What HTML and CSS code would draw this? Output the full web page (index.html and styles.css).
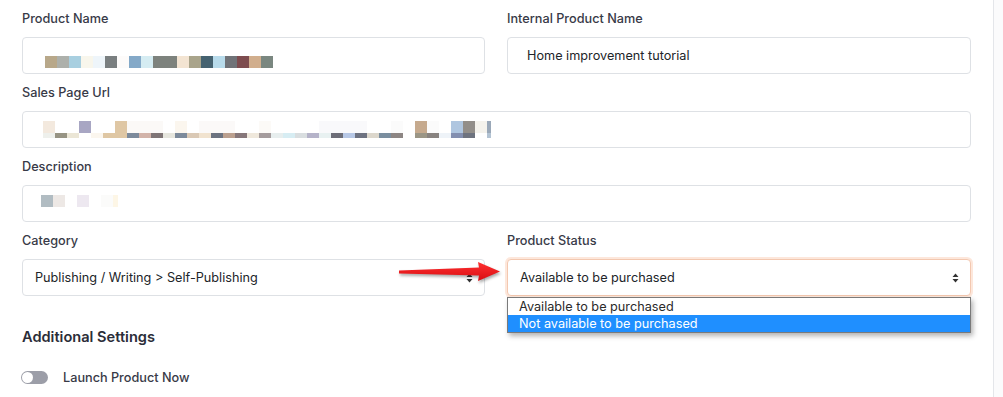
FILE: index.html
```html
<!DOCTYPE html>
<html lang="en">
<head>
    <meta charset="UTF-8">
    <meta name="viewport" content="width=device-width, initial-scale=1.0">
    <title>Product Settings</title>
    <link rel="stylesheet" href="styles.css">
</head>
<body>
    <div class="page">
        <main class="form">
            <div class="row">
                <div class="group">
                    <div class="label">Product Name</div>
                    <div class="control mosaic-name">
                        <svg width="228" height="12" viewBox="0 0 228 12">
                            <rect x="0" width="12" height="12" fill="#b8a88a"/>
                            <rect x="12" width="12" height="12" fill="#adb0ab"/>
                            <rect x="24" width="12" height="12" fill="#a8cfe0"/>
                            <rect x="36" width="12" height="12" fill="#f8f6ec"/>
                            <rect x="48" width="12" height="12" fill="#eef5fa"/>
                            <rect x="60" width="12" height="12" fill="#7a7f80"/>
                            <rect x="72" width="12" height="12" fill="#fdfbfa"/>
                            <rect x="84" width="12" height="12" fill="#84a9c8"/>
                            <rect x="96" width="12" height="12" fill="#d5ecf2"/>
                            <rect x="108" width="24" height="12" fill="#7d827d"/>
                            <rect x="132" width="12" height="12" fill="#f3e4d2"/>
                            <rect x="144" width="12" height="12" fill="#a9a48b"/>
                            <rect x="156" width="12" height="12" fill="#456270"/>
                            <rect x="168" width="12" height="12" fill="#b8dbeb"/>
                            <rect x="180" width="12" height="12" fill="#707378"/>
                            <rect x="192" width="12" height="12" fill="#7e4c4f"/>
                            <rect x="204" width="12" height="12" fill="#d1ae8d"/>
                            <rect x="216" width="12" height="12" fill="#7a8780"/>
                        </svg>
                    </div>
                </div>
                <div class="group">
                    <div class="label">Internal Product Name</div>
                    <div class="control text">Home improvement tutorial</div>
                </div>
            </div>

            <div class="group">
                <div class="label">Sales Page Url</div>
                <div class="control mosaic-url">
                    <svg width="448" height="17" viewBox="0 0 448 17">
                        <!-- top row -->
                        <rect x="0" width="12" height="12" fill="#f3e9de"/>
                        <rect x="36" width="12" height="12" fill="#a8a6c3"/>
                        <rect x="72" width="12" height="12" fill="#dfc7a4"/>
                        <rect x="84" width="36" height="12" fill="#fbf9f7"/>
                        <rect x="132" width="12" height="12" fill="#fbf6ee"/>
                        <rect x="156" width="36" height="12" fill="#fbf9f8"/>
                        <rect x="216" width="12" height="12" fill="#fcfaf7"/>
                        <rect x="276" width="48" height="12" fill="#f9f9fb"/>
                        <rect x="348" width="12" height="12" fill="#fbfbfb"/>
                        <rect x="372" width="12" height="12" fill="#c6aa8e"/>
                        <rect x="384" width="12" height="12" fill="#fbfbfb"/>
                        <rect x="408" width="12" height="12" fill="#afc6e0"/>
                        <rect x="420" width="12" height="12" fill="#928e89"/>
                        <rect x="432" width="12" height="12" fill="#f4f2ec"/>
                        <rect x="444" width="4" height="12" fill="#9aa8b8"/>
                        <!-- bottom row -->
                        <rect x="0" y="12" width="12" height="5" fill="#eef0ec"/>
                        <rect x="12" y="12" width="12" height="5" fill="#979484"/>
                        <rect x="24" y="12" width="12" height="5" fill="#ebe6d6"/>
                        <rect x="48" y="12" width="12" height="5" fill="#fbf6ee"/>
                        <rect x="60" y="12" width="24" height="5" fill="#dfc7a4"/>
                        <rect x="84" y="12" width="12" height="5" fill="#7c8a9b"/>
                        <rect x="96" y="12" width="12" height="5" fill="#d2b3a9"/>
                        <rect x="108" y="12" width="12" height="5" fill="#7f7576"/>
                        <rect x="120" y="12" width="12" height="5" fill="#e6e6de"/>
                        <rect x="132" y="12" width="12" height="5" fill="#7c8a9b"/>
                        <rect x="144" y="12" width="12" height="5" fill="#dac9b5"/>
                        <rect x="156" y="12" width="12" height="5" fill="#f1e3cf"/>
                        <rect x="168" y="12" width="12" height="5" fill="#6c7380"/>
                        <rect x="180" y="12" width="12" height="5" fill="#bba08f"/>
                        <rect x="192" y="12" width="12" height="5" fill="#86777a"/>
                        <rect x="204" y="12" width="12" height="5" fill="#efe8dc"/>
                        <rect x="216" y="12" width="12" height="5" fill="#a59c9d"/>
                        <rect x="228" y="12" width="12" height="5" fill="#e7eeee"/>
                        <rect x="240" y="12" width="12" height="5" fill="#d7edf3"/>
                        <rect x="252" y="12" width="12" height="5" fill="#d9dee0"/>
                        <rect x="264" y="12" width="12" height="5" fill="#b5b3c9"/>
                        <rect x="276" y="12" width="12" height="5" fill="#e8f1f1"/>
                        <rect x="288" y="12" width="12" height="5" fill="#6d6e78"/>
                        <rect x="300" y="12" width="12" height="5" fill="#b7c8e6"/>
                        <rect x="312" y="12" width="12" height="5" fill="#6d7281"/>
                        <rect x="324" y="12" width="12" height="5" fill="#dcd7cc"/>
                        <rect x="336" y="12" width="12" height="5" fill="#7a8e9f"/>
                        <rect x="348" y="12" width="12" height="5" fill="#8d8684"/>
                        <rect x="372" y="12" width="12" height="5" fill="#9b9686"/>
                        <rect x="384" y="12" width="12" height="5" fill="#888380"/>
                        <rect x="396" y="12" width="12" height="5" fill="#eef3f8"/>
                        <rect x="408" y="12" width="12" height="5" fill="#838fb0"/>
                        <rect x="420" y="12" width="12" height="5" fill="#6e737f"/>
                        <rect x="444" y="12" width="4" height="5" fill="#b3c3d3"/>
                    </svg>
                </div>
            </div>

            <div class="group">
                <div class="label">Description</div>
                <div class="control mosaic-desc">
                    <svg width="77" height="12" viewBox="0 0 77 12">
                        <rect x="0" width="12" height="12" fill="#b1bcc2"/>
                        <rect x="12" width="12" height="12" fill="#ede8e5"/>
                        <rect x="36" width="12" height="12" fill="#ede8f0"/>
                        <rect x="60" width="12" height="12" fill="#fbfbfa"/>
                        <rect x="72" width="5" height="12" fill="#fdf6e6"/>
                    </svg>
                </div>
            </div>

            <div class="row selects">
                <div class="group">
                    <div class="label">Category</div>
                    <div class="control select">
                        <span>Publishing / Writing &gt; Self-Publishing</span>
                        <svg class="caret" width="7" height="10" viewBox="0 0 7 10"><path d="M3.5 0.5L6.5 4H0.5Z M3.5 9.5L6.5 6H0.5Z" fill="#333"/></svg>
                    </div>
                </div>
                <div class="group">
                    <div class="label">Product Status</div>
                    <div class="status-wrap">
                        <div class="control select focused">
                            <span>Available to be purchased</span>
                            <svg class="caret" width="7" height="10" viewBox="0 0 7 10"><path d="M3.5 0.5L6.5 4H0.5Z M3.5 9.5L6.5 6H0.5Z" fill="#333"/></svg>
                        </div>
                        <ul class="options">
                            <li>Available to be purchased</li>
                            <li class="active">Not available to be purchased</li>
                        </ul>
                    </div>
                </div>
                <!-- red pointer drawn over the screenshot -->
                <svg class="pointer" width="106" height="28" viewBox="0 0 106 28">
                    <defs>
                        <linearGradient id="red" x1="0" y1="0" x2="0" y2="1">
                            <stop offset="0" stop-color="#ff3030"/>
                            <stop offset="1" stop-color="#d80d12"/>
                        </linearGradient>
                    </defs>
                    <path d="M1 11.5 L81 8.5 L80 3 L102 12.5 L80 22 L81 16.5 L1 14.5 Z" fill="url(#red)"/>
                </svg>
            </div>

            <h3 class="section-title">Additional Settings</h3>
            <div class="switch-row">
                <span class="switch"></span>
                <span class="switch-label">Launch Product Now</span>
            </div>
        </main>
        <aside class="side"></aside>
    </div>
</body>
</html>
```

FILE: styles.css
```css
*{
    margin: 0;
    padding: 0;
    box-sizing: border-box;
}
body {
    font-family: Inter, "Noto Sans", sans-serif;
    font-size: 12.7px;
    color: #212529;
    background: #fff;
}
.page {
    display: flex;
    height: 397px;
    overflow: hidden;
}
.form {
    width: 994px;
    padding: 0 22px;
    border-right: 1px solid #e4e6ea;
}
.side {
    flex: 1;
    background-color: #fbfbfc;
}
.row {
    display: grid;
    grid-template-columns: 463px 464px;
    column-gap: 22px;
}
.selects {
    position: relative;
}
.group {
    padding-top: 10px;
}
.label {
    line-height: 18px;
    margin-bottom: 9px;
    font-weight: 500;
    color: #383a47;
}
.control {
    height: 37px;
    border: 1px solid #dee1e5;
    border-radius: 4px;
    background: #fff;
}
.control svg {
    display: block;
}
.text {
    padding-left: 19px;
    line-height: 35px;
}
.mosaic-name {
    padding: 18px 0 0 22px;
}
.mosaic-url {
    padding: 9px 0 0 20px;
}
.mosaic-desc {
    padding: 9px 0 0 18px;
}
.select {
    display: flex;
    align-items: center;
    justify-content: space-between;
    padding: 0 11px 0 12px;
}
.select .caret {
    display: block;
}
.focused {
    border-color: #f3c8b0;
    box-shadow: 0 0 0 2px #fde7db;
}
.status-wrap {
    position: relative;
}
.options {
    position: absolute;
    left: 0;
    right: 0;
    top: 38px;
    list-style: none;
    background: #fff;
    border: 1px solid #7a7a7a;
    box-shadow: 2px 3px 5px rgba(0, 0, 0, .3);
    z-index: 2;
}
.options li {
    height: 17px;
    line-height: 17px;
    padding-left: 11px;
    color: #2a2a2a;
}
.options .active {
    background-color: #1f8fff;
    color: #fff;
}
.pointer {
    position: absolute;
    left: 376px;
    top: 37px;
    filter: drop-shadow(1px 2px 1.5px rgba(0, 0, 0, .35));
    z-index: 3;
}
.section-title {
    margin-top: 31px;
    font-size: 14.6px;
    line-height: 20px;
    font-weight: 600;
    color: #2b2d38;
}
.switch-row {
    display: flex;
    align-items: center;
    margin-top: 20px;
    height: 20px;
}
.switch {
    position: relative;
    width: 27px;
    height: 13px;
    border-radius: 7px;
    background-color: #9c9ea8;
    margin-left: -1px;
}
.switch::after {
    content: "";
    position: absolute;
    left: 1px;
    top: 1px;
    width: 11px;
    height: 11px;
    border-radius: 50%;
    background: #fff;
}
.switch-label {
    margin-left: 15px;
    font-weight: 500;
    color: #383a47;
}
```
